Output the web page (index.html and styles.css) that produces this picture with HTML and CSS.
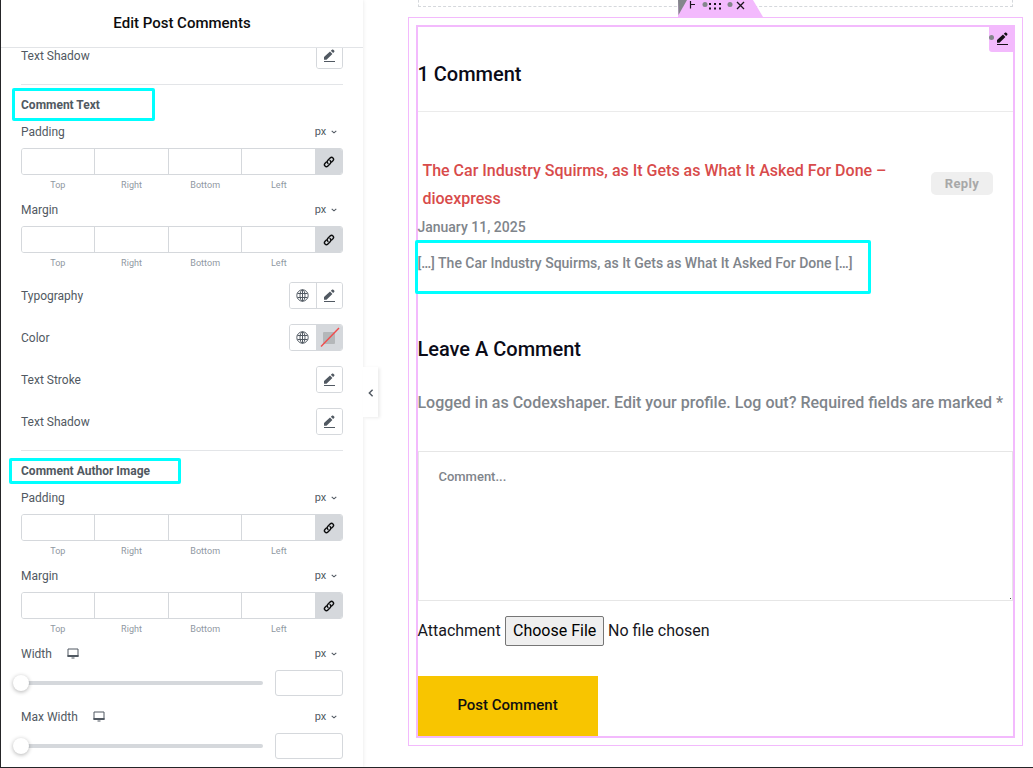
FILE: index.html
```html
<!DOCTYPE html>
<html lang="en">
<head>
<meta charset="utf-8">
<title>Edit Post Comments</title>
<link rel="stylesheet" href="styles.css">
</head>
<body>
<svg class="defs" width="0" height="0">
  <symbol id="pencil" viewBox="0 0 13 14"><path d="M1 10.700V8.100L7 2.500l2.400 2.400-5.900 5.800zM7.800 1.800 9 .7c.4-.4.9-.4 1.300 0l.9.9c.4.4.4.9 0 1.300L10.100 4z" fill="currentColor"/><path d="M1 12.500h11" stroke="currentColor"/></symbol>
  <symbol id="globe" viewBox="0 0 13 13"><g fill="none" stroke="currentColor"><circle cx="6.500" cy="6.500" r="5.700"/><ellipse cx="6.500" cy="6.500" rx="2.500" ry="5.700"/><path d="M1.500 4.500h10M1.500 8.500h10M6.500 1v11"/></g></symbol>
  <symbol id="link" viewBox="0 0 12 12"><g fill="none" stroke="currentColor" stroke-width="1.400" stroke-linecap="round"><path d="M5 7.400C3.900 6.400 4 5.200 4.900 4.300L7.100 2.100c2-2 4.700.6 2.800 2.700L8.600 6.100"/><path d="M7 4.600c1.100 1 1 2.200.1 3.100L4.900 9.900c-2 2-4.700-.6-2.800-2.700L3.400 5.900"/></g></symbol>
  <symbol id="down" viewBox="0 0 6 4"><path d="M.7.8 3 2.800 5.300.8" fill="none" stroke="currentColor" stroke-width="1.100"/></symbol>
  <symbol id="desktop" viewBox="0 0 12 11"><path d="M1 1h10v7.500H1z" fill="none" stroke="currentColor"/><path d="M.5 7h11v2H.5zM4.500 9.600h3v.9h-3z" fill="currentColor"/></symbol>
</svg>
<div class="app">
  <aside class="panel">
    <header class="panel-header">Edit Post Comments</header>
    <div class="panel-body">
      <div class="control first"><span>Text Shadow</span><div class="buttons"><button><svg class="pencil"><use href="#pencil"/></svg></button></div></div>
      <hr>
      <h3><span class="marked">Comment Text<i class="mark mark-text"></i></span></h3>
      <section class="field">
        <div class="label"><span>Padding</span><span class="unit">px<svg><use href="#down"/></svg></span></div>
        <div class="dims"><input><input><input><input><button><svg><use href="#link"/></svg></button></div>
        <div class="sides"><span>Top</span><span>Right</span><span>Bottom</span><span>Left</span></div>
      </section>
      <section class="field next">
        <div class="label"><span>Margin</span><span class="unit">px<svg><use href="#down"/></svg></span></div>
        <div class="dims"><input><input><input><input><button><svg><use href="#link"/></svg></button></div>
        <div class="sides"><span>Top</span><span>Right</span><span>Bottom</span><span>Left</span></div>
      </section>
      <div class="controls">
        <div class="control"><span>Typography</span><div class="buttons"><button><svg class="globe"><use href="#globe"/></svg></button><button><svg class="pencil"><use href="#pencil"/></svg></button></div></div>
        <div class="control"><span>Color</span><div class="buttons"><button><svg class="globe"><use href="#globe"/></svg></button><button class="empty"><svg class="swatch" viewBox="0 0 25 25"><rect x="6" y="7" width="12" height="12" rx="1" fill="#b4b7b9"/><path d="M4 21.500 22 3" stroke="#f04c4c" stroke-width="1.400"/></svg></button></div></div>
        <div class="control"><span>Text Stroke</span><div class="buttons"><button><svg class="pencil"><use href="#pencil"/></svg></button></div></div>
        <div class="control"><span>Text Shadow</span><div class="buttons"><button><svg class="pencil"><use href="#pencil"/></svg></button></div></div>
      </div>
      <hr>
      <h3><span class="marked">Comment Author Image<i class="mark mark-image"></i></span></h3>
      <section class="field">
        <div class="label"><span>Padding</span><span class="unit">px<svg><use href="#down"/></svg></span></div>
        <div class="dims"><input><input><input><input><button><svg><use href="#link"/></svg></button></div>
        <div class="sides"><span>Top</span><span>Right</span><span>Bottom</span><span>Left</span></div>
      </section>
      <section class="field next">
        <div class="label"><span>Margin</span><span class="unit">px<svg><use href="#down"/></svg></span></div>
        <div class="dims"><input><input><input><input><button><svg><use href="#link"/></svg></button></div>
        <div class="sides"><span>Top</span><span>Right</span><span>Bottom</span><span>Left</span></div>
      </section>
      <section class="field width">
        <div class="label"><span>Width<svg class="desktop"><use href="#desktop"/></svg></span><span class="unit">px<svg><use href="#down"/></svg></span></div>
        <div class="slider"><div class="track"><b></b></div><input></div>
      </section>
      <section class="field max-width">
        <div class="label"><span>Max Width<svg class="desktop"><use href="#desktop"/></svg></span><span class="unit">px<svg><use href="#down"/></svg></span></div>
        <div class="slider"><div class="track"><b></b></div><input></div>
      </section>
    </div>
    <button class="collapse"><svg width="6" height="8" viewBox="0 0 6 8"><path d="M4.600.7 1.300 4l3.300 3.300" fill="none" stroke="currentColor" stroke-width="1.400"/></svg></button>
  </aside>
  <main class="canvas">
    <div class="dashed"></div>
    <div class="container">
      <svg class="tab" width="86" height="17" viewBox="0 0 86 17"><path d="M0 0h75l10 17H0z" fill="#f3bafd"/><path d="M0 0h9L.5 15z" fill="#83868b"/><g fill="#83868b"><circle cx="27" cy="4.500" r="2.500"/><circle cx="52" cy="4.500" r="2.500"/></g><path d="M12.500 1v7.500M12 4.500h5" stroke="#1b151d" fill="none" stroke-width="1.200"/><g fill="#1b151d"><path d="M31 3h2v2h-2zM36 3h2v2h-2zM41 3h2v2h-2zM31 7.500h2v2h-2zM36 7.500h2v2h-2zM41 7.500h2v2h-2z"/></g><path d="m59 2 7 7m0-7-7 7" stroke="#1b151d" stroke-width="1.300"/></svg>
      <div class="widget">
        <div class="edit"><i></i><svg class="pencil"><use href="#pencil"/></svg></div>
        <h2 class="count">1 Comment</h2>
        <article class="comment">
          <div class="comment-head"><h4>The Car Industry Squirms, as It Gets as What It Asked For Done – dioexpress</h4><button class="reply">Reply</button></div>
          <p class="date">January 11, 2025</p>
          <p class="text">[…] The Car Industry Squirms, as It Gets as What It Asked For Done […]<i class="mark mark-comment"></i></p>
        </article>
        <h2 class="leave">Leave A Comment</h2>
        <p class="logged">Logged in as Codexshaper. Edit your profile. Log out? Required fields are marked *</p>
        <div class="textarea">Comment...</div>
        <div class="attachment"><span>Attachment</span><button>Choose File</button><span class="file">No file chosen</span></div>
        <button class="submit">Post Comment</button>
      </div>
    </div>
  </main>
</div>
</body>
</html>
```
FILE: styles.css
```css
* { box-sizing: border-box; }
body { margin: 0; font-family: Roboto, "Liberation Sans", sans-serif; background: #fff; }
h2, h3, h4, p { margin: 0; }
button, input { font: inherit; margin: 0; padding: 0; min-width: 0; }
.defs { position: absolute; }
.app { display: flex; width: 1033px; height: 768px; border-left: 1px solid #252528; border-bottom: 1px solid #252528; overflow: hidden; }

.panel { position: relative; width: 362px; flex: none; color: #515962; font-size: 12px; box-shadow: 0 0 4px rgba(0, 0, 0, .1); }
.panel-header { height: 48px; border-bottom: 1px solid #e2e4e7; color: #0c0d0e; font-size: 15px; font-weight: 500; line-height: 46px; text-align: center; }
.panel-body { height: 719px; padding: 0 20px; overflow: hidden; }
.panel hr { height: 1px; margin: 15px 0 10px; border: 0; background: #e3e5e8; }
.panel h3 { height: 20px; margin-bottom: 9px; font-size: 12px; font-weight: 700; line-height: 20px; }
.marked { position: relative; display: inline-block; }
.mark { position: absolute; border: 3px solid #0ff; border-radius: 2px; pointer-events: none; }
.mark-text { left: -9px; top: -7px; width: 143px; height: 33px; }
.mark-image { left: -12px; top: -3px; width: 172px; height: 26px; }

.control { display: flex; justify-content: space-between; height: 27px; line-height: 29px; }
.first { margin-top: -6px; }
.controls { display: grid; gap: 15px; margin-top: 13px; }
.buttons { display: flex; border: 1px solid #d5d8dc; border-radius: 3px; overflow: hidden; }
.buttons button { display: flex; align-items: center; justify-content: center; width: 25px; border: 0; background: #fff; color: #515962; }
.buttons button:not(:last-child) { width: 26px; padding-right: 1px; }
.buttons button + button { width: 26px; border-left: 1px solid #d5d8dc; }
.buttons .empty { background: #d5d8dc; }
.pencil { width: 13px; height: 14px; }
.globe { width: 13px; height: 13px; margin-bottom: 1px; }
.swatch { width: 25px; height: 25px; }

.next { margin-top: 11px; }
.width { margin-top: 11px; }
.max-width { margin-top: 13px; }
.label { display: flex; justify-content: space-between; height: 16px; margin-bottom: 8px; line-height: 16px; }
.unit { display: flex; align-items: center; gap: 4.500px; padding-right: 6.500px; font-size: 11px; letter-spacing: -.2px; }
.unit svg { width: 6px; height: 4px; }
.desktop { width: 12px; height: 11px; margin-left: 15px; vertical-align: -1px; }
.dims { display: grid; grid-template-columns: 73px 74px 73px 74px 28px; height: 27px; border: 1px solid #d5d8dc; border-radius: 3px; overflow: hidden; }
.dims input { border: 0; border-right: 1px solid #d5d8dc; background: #fff; }
.dims button { display: flex; align-items: center; justify-content: center; padding: 0 2px 0 0; border: 0; background: #d5d8dc; color: #0c0d0e; }
.dims svg { width: 12px; height: 12px; }
.sides { display: grid; grid-template-columns: repeat(4, 73.700px); margin-top: 4px; color: #8f98a2; font-size: 9px; letter-spacing: .05px; line-height: 12px; text-align: center; }
.slider { display: flex; align-items: center; justify-content: space-between; height: 26px; }
.slider input { width: 68px; height: 26px; border: 1px solid #d5d8dc; border-radius: 3px; }
.track { display: flex; align-items: center; width: 242px; height: 4px; border-radius: 3px; background: #d5d8dc; }
.track b { flex: none; width: 16px; height: 16px; margin-left: -8px; border-radius: 50%; background: #fff; box-shadow: 0 1px 4px rgba(0, 0, 0, .3); }
.collapse { position: absolute; left: 362px; top: 367px; display: flex; align-items: center; justify-content: center; width: 15px; height: 50px; padding-top: 2px; border: 0; background: #fff; color: #515962; box-shadow: 2px 1px 3px rgba(0, 0, 0, .08); }

.canvas { flex: 1; padding-left: 45px; }
.dashed { width: 595px; height: 7px; margin-left: 10px; border: 1px dashed #d5d8dc; border-top: 0; }
.container { position: relative; width: 615px; height: 729px; margin-top: 10px; padding: 7px; border: 1px solid #f3bafd; }
.tab { position: absolute; left: 269px; top: -18px; }
.widget { position: relative; display: flex; flex-direction: column; width: 599px; height: 713px; border: 2px solid #f3bafd; color: #7f858b; font-weight: 500; text-indent: -.6px; }
.edit { position: absolute; right: 0; top: 0; display: flex; align-items: center; width: 24px; height: 25px; gap: 2px; padding-bottom: 1px; border-radius: 0 0 0 3px; background: #f3bafd; color: #151016; }
.edit i { width: 5px; height: 5px; margin-top: -3px; border-radius: 50%; background: #83868b; }
.widget h2 { color: #0b0b17; font-size: 20px; font-weight: 500; line-height: 28px; }
.count { height: 85px; padding-top: 33px; border-bottom: 1px solid #ebebeb; }
.comment { height: 181px; margin-top: 45px; }
.comment-head { display: flex; justify-content: space-between; padding-left: 4.400px; padding-right: 20px; }
.comment h4 { width: 485px; color: #d84b4b; font-size: 16px; font-weight: 500; line-height: 28px; text-indent: 0; }
.reply { width: 62px; height: 23px; margin-top: 15px; border: 0; border-radius: 5px; background: #efefef; color: #a8a8a8; font-size: 13px; font-weight: 700; letter-spacing: .4px; }
.date { font-size: 14px; line-height: 28px; }
.text { position: relative; margin-top: 8px; font-size: 14px; line-height: 28px; }
.mark-comment { left: -3px; top: -9px; width: 456px; height: 54px; }
.leave { margin-top: -3px; }
.logged { margin-top: 26px; font-size: 16px; line-height: 28px; white-space: nowrap; }
.textarea { position: relative; height: 150px; flex: none; margin-top: 34px; padding: 16px 20px; border: 1px solid #e6e6e6; font-size: 13px; line-height: 18px; }
.textarea::after { content: ""; position: absolute; right: 1px; bottom: 1px; width: 1px; height: 1px; background: #444; }
.attachment { display: flex; align-items: center; height: 30px; margin-top: 15px; gap: 4px; color: #171722; font-size: 16px; font-weight: 400; }
.attachment span { padding-bottom: 2px; }
.attachment .file { text-indent: .4px; }
.attachment button { width: 99px; height: 30px; padding: 0 0 2px 1px; border: 1px solid #767676; border-radius: 2px; background: #efefef; color: #000; text-indent: 0; }
.submit { width: 180px; height: 60px; margin-top: 30px; padding-bottom: 2px; border: 0; background: #f8c500; color: #101010; font-size: 15px; font-weight: 500; text-indent: -1px; }
```
